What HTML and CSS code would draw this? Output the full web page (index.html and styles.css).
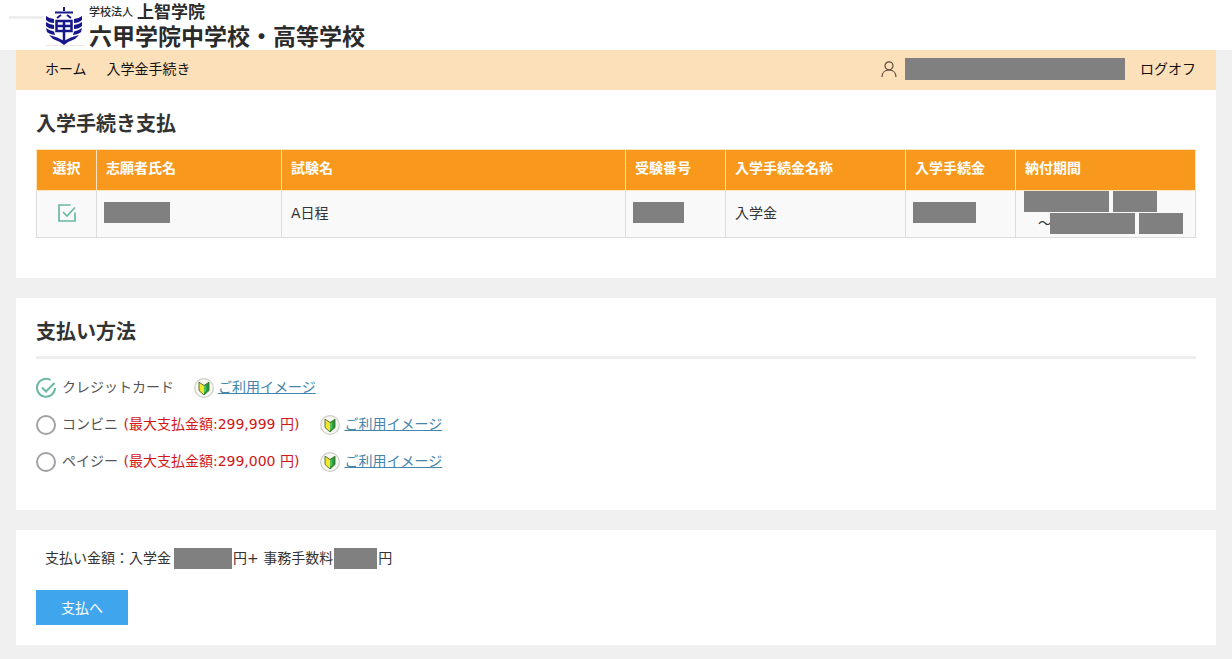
FILE: index.html
```html
<!DOCTYPE html>
<html lang="ja">
<head>
  <meta charset="UTF-8">
  <meta name="viewport" content="width=device-width, initial-scale=1.0">
  <title>入学手続き支払</title>
  <link rel="stylesheet" href="styles.css">
</head>
<body>
  <!-- アイコン定義 -->
  <svg class="icon-defs" aria-hidden="true">
    <symbol id="beginner" viewBox="0 0 20 20">
      <circle cx="10" cy="10" r="9.3" fill="#f8f8f1" stroke="#cdcdc8" stroke-width="1.2"/>
      <path d="M5 4.2 10 7.5V17L5 12.5z" fill="#f4e52c"/>
      <path d="M15 4.2 10 7.5V17l5-4.5z" fill="#1c9b3c"/>
      <path d="M10 8.5 12.3 7v6L10 15z" fill="#55bf5d"/>
      <path d="M5 4.2 10 7.5l5-3.3v8.3L10 17l-5-4.5z" fill="none" stroke="#466b2c" stroke-width=".9"/>
    </symbol>
    <symbol id="radio-check" viewBox="0 0 20 20">
      <path d="M14.5 2A9 9 0 1 0 19 10M6 9.5l4 4L18.5 5" fill="none" stroke="#68b8a5" stroke-width="2"/>
    </symbol>
    <symbol id="box-check" viewBox="0 0 18 18">
      <path d="M12.5 1H1v16h16V8.5M5 8l4 4 8-8.5" fill="none" stroke="#68b8a5" stroke-width="1.7"/>
    </symbol>
  </svg>

  <header class="header">
    <svg class="logo" viewBox="0 0 76 42" aria-hidden="true">
      <path d="M0 11.5h35" stroke="#efefef" stroke-width="3"/>
      <path d="M37 39.5h38" stroke="#f2e6dc"/>
      <g fill="none" stroke="#17178a">
        <path d="M55 1v4M46 6.500h18M52 9l-4 3M58 9l4 3" stroke-width="2"/>
        <path d="M47.500 15h15v10h-15zM47.500 20h15M55 15v20" stroke-width="2.500"/>
      </g>
      <g fill="#17178a">
        <path d="M37 10q4 3 8 3v4q-5 0-8-3zM37 16q4 3 8 3v4q-5 0-8-3zM37 22q4 3 8 3.500l1 3.500q-6-1-8-3z"/>
        <path d="M73 10q-4 3-8 3v4q5 0 8-3zM73 16q-4 3-8 3v4q5 0 8-3zM73 22q-4 3-8 3.500l-1 3.500q6-1 8-3z"/>
        <path d="M40 29q9 2 15 6 6-4 15-6l-4 4q-6 2-11 6-5-4-11-6z"/>
      </g>
    </svg>
    <div class="school">
      <div class="school-group"><span class="school-type">学校法人</span>上智学院</div>
      <div class="school-name">六甲学院中学校・高等学校</div>
    </div>
  </header>

  <main class="container">
    <nav class="nav">
      <a href="#">ホーム</a>
      <a href="#">入学金手続き</a>
      <div class="user">
        <svg class="user-icon" viewBox="0 0 16 16" aria-hidden="true">
          <g fill="none" stroke="#5b4b3a" stroke-width="1.2">
            <circle cx="8" cy="4.8" r="4"/>
            <path d="M1 16c0-4.5 3-7 7-7s7 2.5 7 7"/>
          </g>
        </svg>
        <span class="mask mask-user"></span>
        <a href="#">ログオフ</a>
      </div>
    </nav>

    <section class="panel panel-payment">
      <h1 class="title">入学手続き支払</h1>
      <table class="table">
        <thead>
          <tr>
            <th class="col-select">選択</th>
            <th class="col-name">志願者氏名</th>
            <th>試験名</th>
            <th class="col-number">受験番号</th>
            <th class="col-fee-name">入学手続金名称</th>
            <th class="col-fee">入学手続金</th>
            <th class="col-period">納付期間</th>
          </tr>
        </thead>
        <tbody>
          <tr>
            <td class="col-select">
              <label class="check">
                <input type="checkbox" aria-label="選択" checked>
                <svg aria-hidden="true"><use href="#box-check"/></svg>
              </label>
            </td>
            <td class="masked"><span class="mask mask-name"></span></td>
            <td>A日程</td>
            <td class="masked"><span class="mask mask-number"></span></td>
            <td>入学金</td>
            <td class="masked"><span class="mask mask-fee"></span></td>
            <td class="masked">
              <div class="period">
                <span class="mask mask-date"></span>
                <span class="mask mask-time"></span>
              </div>
              <div class="period period-end">
                <span>～</span><span class="mask mask-date"></span>
                <span class="mask mask-time"></span>
              </div>
            </td>
          </tr>
        </tbody>
      </table>
    </section>

    <section class="panel panel-method">
      <h2 class="title title-line">支払い方法</h2>
      <div class="method">
        <label class="radio">
          <span class="check">
            <input type="radio" name="method" checked>
            <svg aria-hidden="true"><use href="#radio-check"/></svg>
          </span>
          <span class="method-name">クレジットカード</span>
        </label>
        <svg class="beginner" aria-hidden="true"><use href="#beginner"/></svg>
        <a class="link" href="#">ご利用イメージ</a>
      </div>
      <div class="method">
        <label class="radio">
          <span class="check">
            <input type="radio" name="method">
            <svg aria-hidden="true"><use href="#radio-check"/></svg>
          </span>
          <span class="method-name">コンビニ <span class="limit">(最大支払金額:299,999 円)</span></span>
        </label>
        <svg class="beginner" aria-hidden="true"><use href="#beginner"/></svg>
        <a class="link" href="#">ご利用イメージ</a>
      </div>
      <div class="method">
        <label class="radio">
          <span class="check">
            <input type="radio" name="method">
            <svg aria-hidden="true"><use href="#radio-check"/></svg>
          </span>
          <span class="method-name">ペイジー <span class="limit">(最大支払金額:299,000 円)</span></span>
        </label>
        <svg class="beginner" aria-hidden="true"><use href="#beginner"/></svg>
        <a class="link" href="#">ご利用イメージ</a>
      </div>
    </section>

    <section class="panel panel-total">
      <p class="total">
        <span>支払い金額：入学金</span><span class="mask mask-amount"></span><span>円+ 事務手数料</span><span class="mask mask-charge"></span><span>円</span>
      </p>
      <button type="button" class="btn">支払へ</button>
    </section>
  </main>
</body>
</html>
```

FILE: styles.css
```css
* {
  box-sizing: border-box;
}

body {
  margin: 0;
  background: #f0f0f0;
  color: #333;
  font-family: "DejaVu Sans", "Noto Sans CJK JP", sans-serif;
  font-size: 14px;
  line-height: 20px;
}

a {
  color: #111;
  text-decoration: none;
}

.icon-defs {
  display: none;
}

/* 伏せ字 */
.mask {
  display: block;
  flex: none;
  height: 21px;
  background: #808080;
}

/* ヘッダー */
.header {
  display: flex;
  align-items: flex-start;
  gap: 4px;
  height: 50px;
  padding: 0 9px;
  background: #fff;
}

.logo {
  width: 76px;
  height: 42px;
  margin-top: 6px;
}

.school {
  color: #2b2b2b;
  font-family: "Noto Sans CJK JP", sans-serif;
  font-weight: bold;
}

.school-group {
  display: flex;
  align-items: center;
  gap: 4px;
  height: 22px;
  font-size: 17px;
  line-height: 22px;
}

.school-type {
  font-size: 11px;
  font-weight: 500;
}

.school-name {
  font-size: 23px;
  line-height: 27px;
}

.container {
  margin: 0 16px;
}

/* ナビ */
.nav {
  display: flex;
  align-items: center;
  gap: 20px;
  height: 40px;
  padding: 0 20px 3px 29px;
  background: #fce0ba;
}

.user {
  display: flex;
  align-items: center;
  margin-left: auto;
}

.user-icon {
  width: 16px;
  height: 16px;
  margin-right: 8px;
}

.mask-user {
  width: 220px;
  height: 22px;
  margin-right: 15px;
}

/* パネル */
.panel {
  margin-bottom: 20px;
  padding: 20px;
  background: #fff;
}

.panel-payment {
  padding-bottom: 40px;
}

.title {
  margin: 0 0 10px;
  font-size: 20px;
  line-height: 29px;
}

.title-line {
  padding-bottom: 9px;
  border-bottom: 3px solid #eee;
}

/* 支払テーブル */
.table {
  width: 100%;
  table-layout: fixed;
  border-collapse: collapse;
}

.table th,
.table td {
  border: 1px solid #dcdcdc;
  text-align: left;
}

.table th {
  height: 41px;
  padding: 0 9px 4px;
  border-color: #fbe3c0;
  background: #f8991d;
  color: #fff;
}

.table td {
  height: 46px;
  padding: 0 9px 3px;
  background: #f9f9f9;
}

.table .col-select {
  width: 60px;
  padding: 0 0 4px;
  text-align: center;
}

.col-name {
  width: 185px;
}

.col-number {
  width: 100px;
}

.col-fee-name {
  width: 180px;
}

.col-fee {
  width: 110px;
}

.col-period {
  width: 180px;
}

.table .masked {
  padding-left: 7px;
  padding-right: 7px;
}

.mask-name {
  width: 66px;
}

.mask-number {
  width: 51px;
}

.mask-fee {
  width: 63px;
}

.mask-date {
  width: 85px;
}

.mask-time {
  width: 44px;
}

.period {
  display: flex;
  gap: 4px;
  height: 21px;
  padding-left: 1px;
}

.period-end {
  justify-content: flex-end;
  margin-top: 1px;
  padding-right: 5px;
}

.period-end span:first-child {
  margin-right: -6px;
}

/* チェック・ラジオ */
.check {
  display: inline-grid;
  vertical-align: middle;
}

.check input,
.check svg {
  grid-area: 1 / 1;
  width: 20px;
  height: 20px;
  margin: 0;
}

.check input {
  appearance: none;
  border: 2px solid #a2a2a2;
}

.check input[type="radio"] {
  border-radius: 50%;
}

.check input:checked {
  border-color: transparent;
}

.check svg {
  display: none;
  pointer-events: none;
}

.check input:checked + svg {
  display: block;
}

.table .check svg {
  width: 18px;
  height: 18px;
  margin: 1px;
}

/* 支払い方法 */
.panel-method {
  padding-bottom: 30px;
}

.method {
  display: flex;
  align-items: center;
  height: 37px;
}

.radio {
  display: flex;
  align-items: center;
  gap: 6px;
  color: #555;
}

.method-name,
.link {
  padding-bottom: 1px;
}

.limit {
  margin: 0 1px;
  color: #d01818;
}

.beginner {
  width: 20px;
  height: 20px;
  margin: 0 4px 0 20px;
}

.link {
  color: #4385ab;
  text-decoration: underline;
}

/* 支払い金額 */
.panel-total {
  margin-bottom: 15px;
  padding-top: 18px;
}

.total {
  display: flex;
  align-items: center;
  margin: 0 0 22px;
  padding-left: 9px;
  height: 20px;
}

.mask-amount {
  width: 58px;
  margin: 0 1px 0 3px;
}

.mask-charge {
  width: 43px;
  margin: 0 1px;
}

.btn {
  width: 92px;
  height: 35px;
  padding: 0 0 2px;
  border: 0;
  background: #3fa6ed;
  color: #fff;
  font-family: inherit;
  font-size: 14px;
}
```
